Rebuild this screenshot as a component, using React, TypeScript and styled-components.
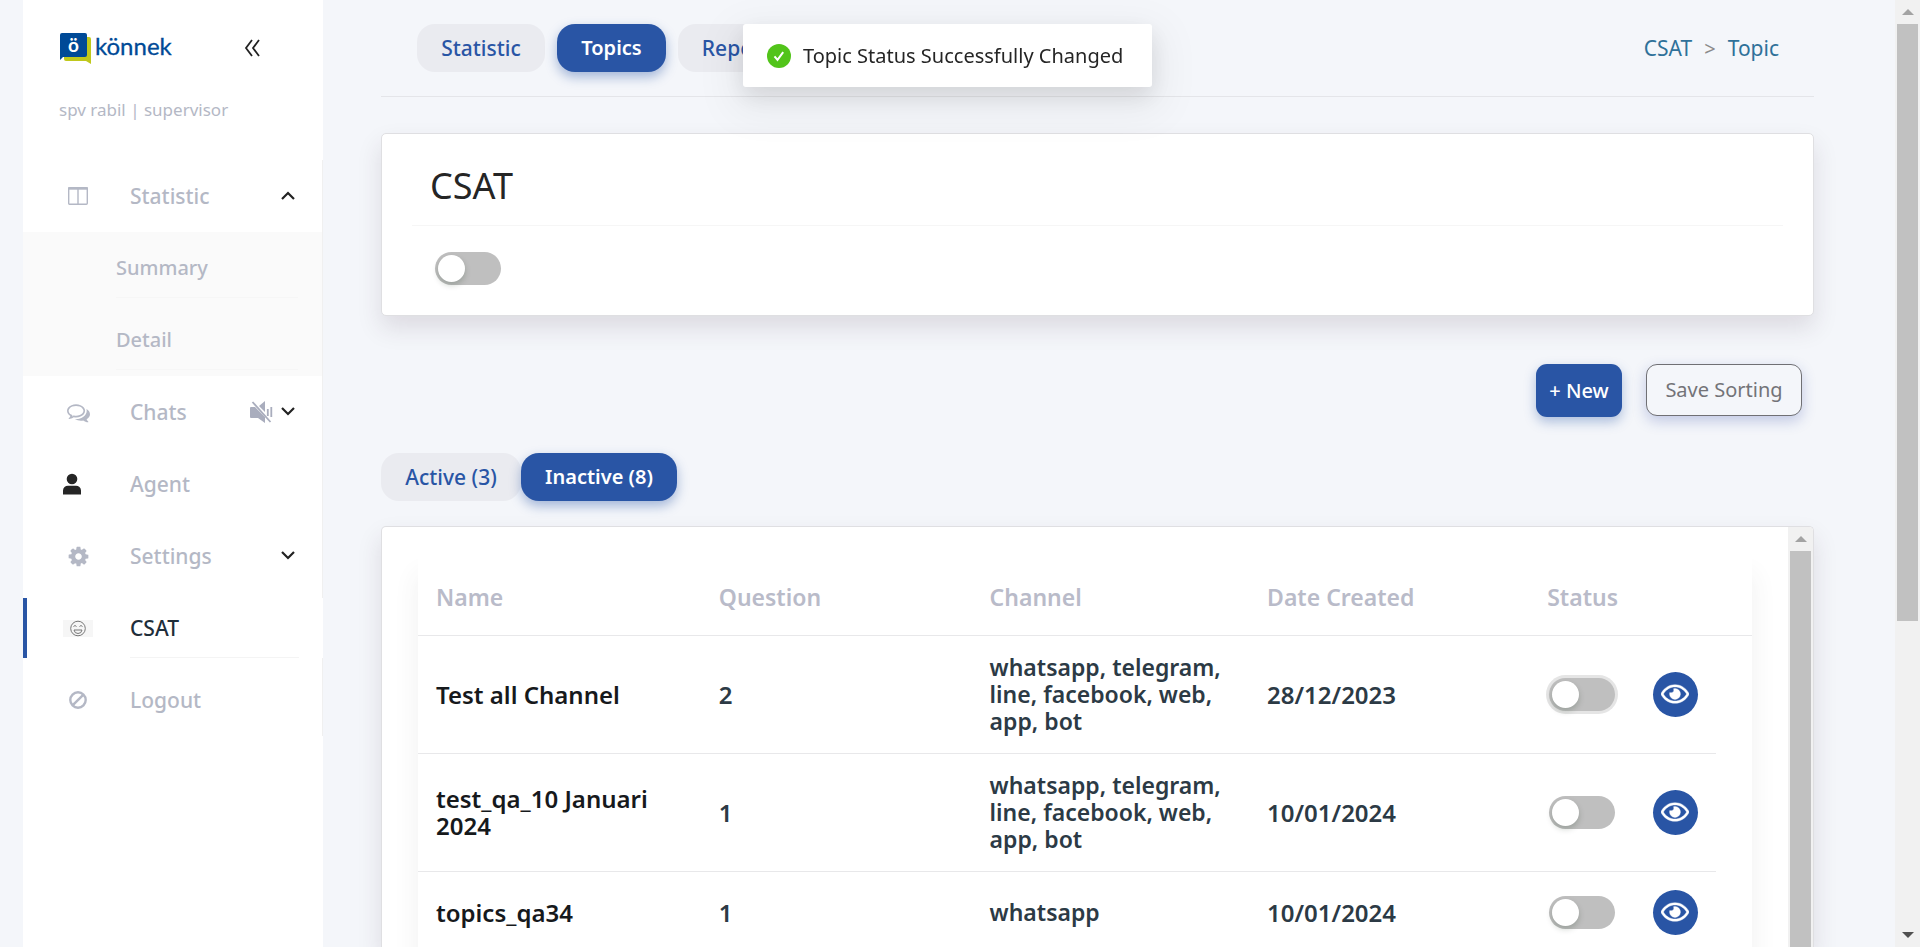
import React from "react";
import styled, { createGlobalStyle } from "styled-components";
import { FaRegEye } from "react-icons/fa";

const Global = createGlobalStyle`
  *, *::before, *::after { box-sizing: border-box; }
  body { margin: 0; background: #f4f6fa; color: #252525; font-family: "Noto Sans", sans-serif; font-size: 20px; overflow: hidden; }
  button { font: inherit; border: 0; cursor: pointer; }
  a { color: inherit; text-decoration: none; }
`;

const Viewport = styled.div`
  display: flex;
  height: 100vh;
  overflow: hidden;
  padding-left: 23px;
`;

/* Sidebar */
const Sidebar = styled.aside`
  flex: 0 0 300px;
  background: #fff;
`;
const Brand = styled.div`
  display: flex;
  align-items: center;
  justify-content: space-between;
  height: 96px;
  padding: 0 62px 0 36px;
`;
const CollapseButton = styled.button`
  display: flex;
  padding: 0;
  background: none;
`;
const UserLine = styled.p`
  margin: 0;
  height: 64px;
  padding-left: 36px;
  font-size: 17px;
  line-height: 28px;
  color: #b4b8c5;
`;
const Menu = styled.nav`
  border-right: 1px solid #f0f0f0;
  line-height: 60px;
`;
const MenuSlot = styled.div`
  padding: 6px 0;
`;
const MenuItem = styled.a<{ $active?: boolean }>`
  display: flex;
  align-items: center;
  height: 60px;
  margin-right: ${(p) => (p.$active ? "-1px" : "0")};
  padding: 0 24px 0 ${(p) => (p.$active ? "29px" : "33px")};
  border-left: ${(p) => (p.$active ? "4px solid #2955a5" : "0")};
  background: #fff;
  color: ${(p) => (p.$active ? "#1f2e3a" : "#b4b8c5")};
  font-size: 21px;
`;
const IconBox = styled.span<{ $start?: boolean }>`
  display: flex;
  flex: 0 0 44px;
  justify-content: ${(p) => (p.$start ? "flex-start" : "center")};
  padding-left: ${(p) => (p.$start ? "6px" : "0")};
  margin-right: 30px;
`;
const MenuLabel = styled.span<{ $line?: boolean }>`
  flex: 1;
  height: 60px;
  border-bottom: 1px solid ${(p) => (p.$line ? "#f4f4f4" : "transparent")};
  font-weight: 500;
`;
const MenuTools = styled.span`
  display: flex;
  align-items: center;
  gap: 8px;
  padding-right: 3px;
  color: #222;
`;
const SubMenu = styled.div`
  padding: 6px 24px 6px 93px;
  background: #fafafa;
`;
const SubItem = styled.a`
  display: block;
  height: 60px;
  border-bottom: 1px solid #f6f6f6;
  color: #b4b8c5;
  font-weight: 500;
  & + & { margin-top: 12px; }
`;

/* Main column */
const Main = styled.main`
  flex: 1;
  display: flex;
  flex-direction: column;
  min-width: 0;
  padding: 0 81px 0 58px;
`;
const TopBar = styled.header`
  flex: none;
  display: flex;
  align-items: center;
  justify-content: space-between;
  height: 97px;
  padding: 0 35px 0 36px;
  border-bottom: 1px solid #e4e5e9;
`;
const PillRow = styled.div<{ $gap: number }>`
  display: flex;
  gap: ${(p) => p.$gap}px;
`;
const Pill = styled.button<{ $active?: boolean; $width: number }>`
  width: ${(p) => p.$width}px;
  height: 48px;
  padding: 0;
  border-radius: 18px;
  background: ${(p) => (p.$active ? "#2955a5" : "#eaebf0")};
  color: ${(p) => (p.$active ? "#fff" : "#2955a5")};
  font-size: ${(p) => (p.$active ? 20 : 21)}px;
  font-weight: ${(p) => (p.$active ? 600 : 500)};
  line-height: 46px;
  box-shadow: ${(p) => (p.$active ? "0 5px 12px rgba(41, 85, 165, 0.4)" : "none")};
`;
const Crumbs = styled.nav`
  display: flex;
  align-items: center;
  gap: 12px;
  color: #2f7199;
  font-size: 21px;
  span { color: #8a8a8a; font-size: 20px; }
`;
const CsatCard = styled.section`
  flex: none;
  margin-top: 36px;
  height: 183px;
  padding: 0 30px;
  border: 1px solid #dfdfe2;
  border-radius: 5px;
  background: #fff;
  box-shadow: 0 12px 24px rgba(60, 40, 60, 0.13);
`;
const CardTitle = styled.h1`
  margin: 0;
  height: 92px;
  padding: 28px 0 0 18px;
  border-bottom: 1px solid #f6f6f6;
  font-size: 36px;
  font-weight: 400;
  line-height: 48px;
`;
const CardBody = styled.div`
  display: flex;
  padding: 26px 23px;
`;
const Toggle = styled.input.attrs({ type: "checkbox" })<{ $ring?: boolean }>`
  appearance: none;
  flex: none;
  display: block;
  width: 66px;
  height: 33px;
  margin: 0;
  padding: 3px;
  border-radius: 17px;
  background: #bfbfbf;
  box-shadow: ${(p) => (p.$ring ? "0 0 0 3px #e5e5e5" : "none")};
  cursor: pointer;
  &::before {
    content: "";
    display: block;
    width: 27px;
    height: 27px;
    border-radius: 50%;
    background: #fff;
    box-shadow: 0 3px 6px rgba(0, 35, 11, 0.2);
  }
  &:checked { background: #2955a5; }
  &:checked::before { margin-left: 33px; }
`;
const Actions = styled.div`
  flex: none;
  display: flex;
  justify-content: flex-end;
  gap: 24px;
  height: 137px;
  padding: 48px 12px 0 0;
`;
const NewButton = styled.button`
  width: 86px;
  height: 53px;
  padding: 0;
  border-radius: 11px;
  background: #2955a5;
  color: #fff;
  font-weight: 500;
  line-height: 52px;
  white-space: nowrap;
  box-shadow: 0 5px 12px rgba(41, 85, 165, 0.35);
`;
const SaveButton = styled(NewButton)`
  width: 156px;
  height: 52px;
  border: 1px solid #707074;
  background: #f4f6fa;
  color: #737378;
  font-weight: 400;
  line-height: 48px;
  box-shadow: 0 5px 14px rgba(41, 65, 165, 0.25);
`;
const TableCard = styled.section`
  flex: 1;
  min-height: 0;
  display: flex;
  margin-top: 25px;
  border: 1px solid #dfdfe2;
  border-bottom: 0;
  border-radius: 5px 5px 0 0;
  background: #fff;
  overflow: hidden;
  box-shadow: 0 12px 24px rgba(60, 40, 60, 0.13);
`;
const TablePane = styled.div`
  flex: 1;
  min-width: 0;
  padding: 24px 36px 0;
`;
const TableFrame = styled.div`
  background: #fff;
  box-shadow: 0 24px 24px rgba(60, 60, 60, 0.08);
`;
const Table = styled.table`
  width: 100%;
  border-collapse: collapse;
  table-layout: fixed;
  line-height: 27px;
  text-align: left;
`;
const HeadCell = styled.th`
  height: 84px;
  padding: 10px 18px 0;
  border-bottom: 1px solid #e8e8ea;
  color: #b9bbc9;
  font-size: 23px;
  font-weight: 600;
`;
const Cell = styled.td<{ $strong?: boolean; $icon?: boolean; $wide?: boolean }>`
  height: 82px;
  padding: 18px ${(p) => (p.$icon ? "0" : "18px")} 18px 18px;
  border-bottom: 1px solid #e8e8ea;
  color: ${(p) => (p.$strong ? "#16191c" : "#2c3a45")};
  font-size: ${(p) => (p.$wide ? 24 : 23)}px;
  font-weight: 600;
`;
const StatusBox = styled.div`
  padding-left: 2px;
`;
const EyeButton = styled.button`
  display: flex;
  align-items: center;
  justify-content: center;
  width: 45px;
  height: 45px;
  padding: 0;
  border-radius: 50%;
  background: #2955a5;
  color: #fff;
  svg { stroke: currentColor; stroke-width: 8px; }
`;

/* Scroll bars */
const Track = styled.div`
  flex: 0 0 25px;
  display: flex;
  flex-direction: column;
  align-items: center;
  background: #f1f1f1;
`;
const Arrow = styled.span<{ $down?: boolean }>`
  flex: 0 0 24px;
  display: flex;
  align-items: center;
  &::before {
    content: "";
    border: 6px solid transparent;
    border-top: ${(p) => (p.$down ? "6px solid #505050" : "0")};
    border-bottom: ${(p) => (p.$down ? "0" : "6px solid #a3a3a3")};
  }
`;
const Thumb = styled.span<{ $share: number }>`
  flex: 0 1 ${(p) => p.$share}%;
  width: 21px;
  background: #c1c1c1;
`;
const Spacer = styled.span`
  flex: 1;
`;

const Toast = styled.div`
  position: fixed;
  top: 24px;
  left: 50%;
  display: flex;
  align-items: center;
  gap: 12px;
  width: 409px;
  height: 63px;
  margin-left: -217px;
  padding-left: 24px;
  border-radius: 3px;
  background: #fff;
  box-shadow: 0 9px 24px rgba(0, 0, 0, 0.1), 0 14px 42px 12px rgba(0, 0, 0, 0.05);
  white-space: nowrap;
`;

const Svg = ({ size, d }: { size: number; d: string }) => (
  <svg width={size} height={size} viewBox="0 0 1792 1792" fill="currentColor" aria-hidden="true">
    <path d={d} />
  </svg>
);
const COMMENTS =
  "M704 384q-153 0-286 52t-211.5 141-78.5 191q0 82 53 158t149 132l97 56-35 84q34-20 62-39l44-31 53 10q78 14 153 14 153 0 286-52t211.5-141 78.5-191-78.5-191-211.5-141-286-52zm0-128q191 0 353.5 68.5t256.5 186.5 94 257-94 257-256.5 186.5-353.5 68.5q-86 0-176-16-124 88-278 128-36 9-86 16h-3q-11 0-20.5-8t-11.5-21q-1-3-1-6.500t.5-6.500 2-6l2.500-5 3.500-5.500 4-5 4.500-5 4-4.500q5-6 23-25t26-29.500 22.500-29 25-38.500 20.500-44q-124-72-195-177t-71-224q0-139 94-257t256.5-186.5 353.5-68.5zm822 1169q10 24 20.500 44t25 38.500 22.500 29 26 29.500 23 25q1 1 4 4.500t4.500 5 4 5 3.500 5.500l2.500 5 2 6 .5 6.500-1 6.500q-3 14-13 22t-22 7q-50-7-86-16-154-40-278-128-90 16-176 16-271 0-472-132 58 4 88 4 161 0 309-45t264-129q125-92 192-212t67-254q0-77-23-152 129 71 204 178t75 230q0 120-71 224.5t-195 176.5z";
const COG =
  "M1152 896q0-106-75-181t-181-75-181 75-75 181 75 181 181 75 181-75 75-181zm512-109v222q0 12-8 23t-20 13l-185 28q-19 54-39 91 35 50 107 138 10 12 10 25t-9 23q-27 37-99 108t-94 71q-12 0-26-9l-138-108q-44 23-91 38-16 136-29 186-7 28-36 28h-222q-14 0-24.5-8.5t-11.5-21.5l-28-184q-49-16-90-37l-141 107q-10 9-25 9-14 0-25-11-126-114-165-168-7-10-7-23 0-12 8-23 15-21 51-66.5t54-70.5q-27-50-41-99l-183-27q-13-2-21-12.5t-8-23.5v-222q0-12 8-23t19-13l186-28q14-46 39-92-40-57-107-138-10-12-10-24 0-10 9-23 26-36 98.5-107.5t94.5-71.5q13 0 26 10l138 107q44-23 91-38 16-136 29-186 7-28 36-28h222q14 0 24.5 8.5t11.5 21.5l28 184q49 16 90 37l142-107q9-9 24-9 13 0 25 10 129 119 165 170 7 8 7 22 0 12-8 23-15 21-51 66.5t-54 70.5q26 50 41 98l183 28q13 2 21 12.5t8 23.5z";

const Chevron = ({ up }: { up?: boolean }) => (
  <svg width="14" height="12" viewBox="0 0 14 12" fill="none" stroke="#222" strokeWidth="2.2" aria-hidden="true">
    <path d={up ? "M1 9l6-6 6 6" : "M1 2l6 6 6-6"} />
  </svg>
);

const rows = [
  { name: "Test all Channel", q: 2, channel: "whatsapp, telegram, line, facebook, web, app, bot", date: "28/12/2023" },
  { name: "test_qa_10 Januari 2024", q: 1, channel: "whatsapp, telegram, line, facebook, web, app, bot", date: "10/01/2024" },
  { name: "topics_qa34", q: 1, channel: "whatsapp", date: "10/01/2024" },
];

export default function App() {
  return (
    <>
      <Global />
      <Viewport>
        <Sidebar>
          <Brand>
            <svg width="122" height="49" viewBox="0 -8 122 49" role="img" aria-label="könnek">
              <path d="M5 5h25a2 2 0 0 1 2 2v25l-5-3H7a2 2 0 0 1-2-2z" fill="#c0c81c" />
              <path d="M3 1h23a2 2 0 0 1 2 2v20a2 2 0 0 1-2 2H4l-3 3V3a2 2 0 0 1 2-2z" fill="#004a97" />
              <text x="14.5" y="20" textAnchor="middle" fontFamily="Lato, sans-serif" fontSize="19" fontWeight="700" fill="#fff">ö</text>
              <text x="36" y="23" fontFamily="Lato, sans-serif" fontSize="24" fill="#004a97" stroke="#004a97" strokeWidth="0.3">könnek</text>
            </svg>
            <CollapseButton aria-label="Collapse menu">
              <svg width="17" height="18" viewBox="0 0 17 18" fill="none" stroke="#222" strokeWidth="1.8">
                <path d="M8 1L2 9l6 8M15 1L9 9l6 8" />
              </svg>
            </CollapseButton>
          </Brand>
          <UserLine>spv rabil | supervisor</UserLine>
          <Menu>
            <MenuSlot>
              <MenuItem href="#statistic">
                <IconBox>
                  <svg width="20" height="18" viewBox="0 0 20 18" fill="none" stroke="#b4b8c5" aria-hidden="true">
                    <rect x="0.7" y="0.7" width="18.6" height="16.6" rx="1" strokeWidth="1.4" />
                    <path d="M0 1.5h20" strokeWidth="2.4" />
                    <path d="M10 2v15" strokeWidth="1.4" />
                  </svg>
                </IconBox>
                <MenuLabel>Statistic</MenuLabel>
                <MenuTools><Chevron up /></MenuTools>
              </MenuItem>
            </MenuSlot>
            <SubMenu>
              <SubItem href="#summary">Summary</SubItem>
              <SubItem href="#detail">Detail</SubItem>
            </SubMenu>
            <MenuSlot>
              <MenuItem href="#chats">
                <IconBox><Svg size={23} d={COMMENTS} /></IconBox>
                <MenuLabel>Chats</MenuLabel>
                <MenuTools>
                  <svg width="24" height="24" viewBox="0 0 24 24" fill="#a9adbd" aria-hidden="true">
                    <path d="M1 8a1 1 0 0 1 1-1h4l10 10v6l-7-5H2a1 1 0 0 1-1-1zM10 6l6-5v11z" />
                    <path d="M3.500 2l18 20" stroke="#a9adbd" strokeWidth="1.800" />
                    <path d="M18.800 9v7M22.300 7v10" stroke="#a9adbd" strokeWidth="1.800" />
                  </svg>
                  <Chevron />
                </MenuTools>
              </MenuItem>
            </MenuSlot>
            <MenuSlot>
              <MenuItem href="#agent">
                <IconBox $start>
                  <svg width="20" height="22" viewBox="0 0 20 22" fill="#252525" aria-hidden="true">
                    <circle cx="10" cy="6" r="5.300" />
                    <path d="M1 21.500v-4a5 5 0 0 1 5-4.800h8a5 5 0 0 1 5 4.800v4z" />
                  </svg>
                </IconBox>
                <MenuLabel>Agent</MenuLabel>
              </MenuItem>
            </MenuSlot>
            <MenuSlot>
              <MenuItem href="#settings">
                <IconBox><Svg size={23} d={COG} /></IconBox>
                <MenuLabel>Settings</MenuLabel>
                <MenuTools><Chevron /></MenuTools>
              </MenuItem>
            </MenuSlot>
            <MenuSlot>
              <MenuItem href="#csat" $active aria-current="page">
                <IconBox>
                  <svg width="30" height="17" viewBox="0 0 30 17" fill="none" stroke="#777" aria-hidden="true">
                    <path fill="#f6f6f6" stroke="none" d="M0 0h30v17H0z" />
                    <circle cx="15" cy="8.500" r="7.300" />
                    <path d="M10.500 6.500q1.500-2 3 0M16.500 6.500q1.500-2 3 0M11 10h8q-.5 3.500-4 3.500T11 10z" />
                  </svg>
                </IconBox>
                <MenuLabel $line>CSAT</MenuLabel>
              </MenuItem>
            </MenuSlot>
            <MenuSlot>
              <MenuItem href="#logout">
                <IconBox>
                  <svg width="18" height="18" viewBox="0 0 18 18" fill="none" stroke="#b4b8c5" strokeWidth="2.400" aria-hidden="true">
                    <circle cx="9" cy="9" r="7.700" />
                    <path d="M3.800 14.200L14.200 3.800" />
                  </svg>
                </IconBox>
                <MenuLabel>Logout</MenuLabel>
              </MenuItem>
            </MenuSlot>
          </Menu>
        </Sidebar>

        <Main>
          <TopBar>
            <PillRow $gap={12}>
              <Pill $width={128}>Statistic</Pill>
              <Pill $width={109} $active>Topics</Pill>
              <Pill $width={126}>Reports</Pill>
            </PillRow>
            <Crumbs aria-label="Breadcrumb">
              <a href="#csat">CSAT</a>
              <span>&gt;</span>
              <a href="#topic">Topic</a>
            </Crumbs>
          </TopBar>

          <CsatCard>
            <CardTitle id="csat-title">CSAT</CardTitle>
            <CardBody>
              <Toggle aria-labelledby="csat-title" />
            </CardBody>
          </CsatCard>

          <Actions>
            <NewButton>+ New</NewButton>
            <SaveButton>Save Sorting</SaveButton>
          </Actions>

          <PillRow $gap={0}>
            <Pill $width={140}>Active (3)</Pill>
            <Pill $width={156} $active>Inactive (8)</Pill>
          </PillRow>

          <TableCard>
            <TablePane>
              <TableFrame>
                <Table>
                  <colgroup>
                    <col style={{ width: "21.2%" }} />
                    <col style={{ width: "20.3%" }} />
                    <col style={{ width: "20.8%" }} />
                    <col style={{ width: "21%" }} />
                    <col style={{ width: "7.9%" }} />
                    <col style={{ width: "6.1%" }} />
                    <col />
                  </colgroup>
                  <thead>
                    <tr>
                      <HeadCell>Name</HeadCell>
                      <HeadCell>Question</HeadCell>
                      <HeadCell>Channel</HeadCell>
                      <HeadCell>Date Created</HeadCell>
                      <HeadCell colSpan={3}>Status</HeadCell>
                    </tr>
                  </thead>
                  <tbody>
                    {rows.map((r, i) => (
                      <tr key={r.name}>
                        <Cell $strong $wide>{r.name}</Cell>
                        <Cell $wide>{r.q}</Cell>
                        <Cell>{r.channel}</Cell>
                        <Cell $wide>{r.date}</Cell>
                        <Cell $icon>
                          <StatusBox><Toggle $ring={i === 0} aria-label={`Status of ${r.name}`} /></StatusBox>
                        </Cell>
                        <Cell $icon>
                          <EyeButton aria-label={`View ${r.name}`}><FaRegEye size={28} /></EyeButton>
                        </Cell>
                        <td />
                      </tr>
                    ))}
                  </tbody>
                </Table>
              </TableFrame>
            </TablePane>
            <Track>
              <Arrow />
              <Thumb $share={100} />
            </Track>
          </TableCard>
        </Main>

        <Track>
          <Arrow />
          <Thumb $share={63} />
          <Spacer />
          <Arrow $down />
        </Track>
      </Viewport>
      <Toast role="status">
        <svg width="24" height="24" viewBox="0 0 24 24" aria-hidden="true">
          <circle cx="12" cy="12" r="12" fill="#52c41a" />
          <path d="M7.500 12.300l3 3.500 5.700-7.600" fill="none" stroke="#fff" strokeWidth="2" />
        </svg>
        Topic Status Successfully Changed
      </Toast>
    </>
  );
}
